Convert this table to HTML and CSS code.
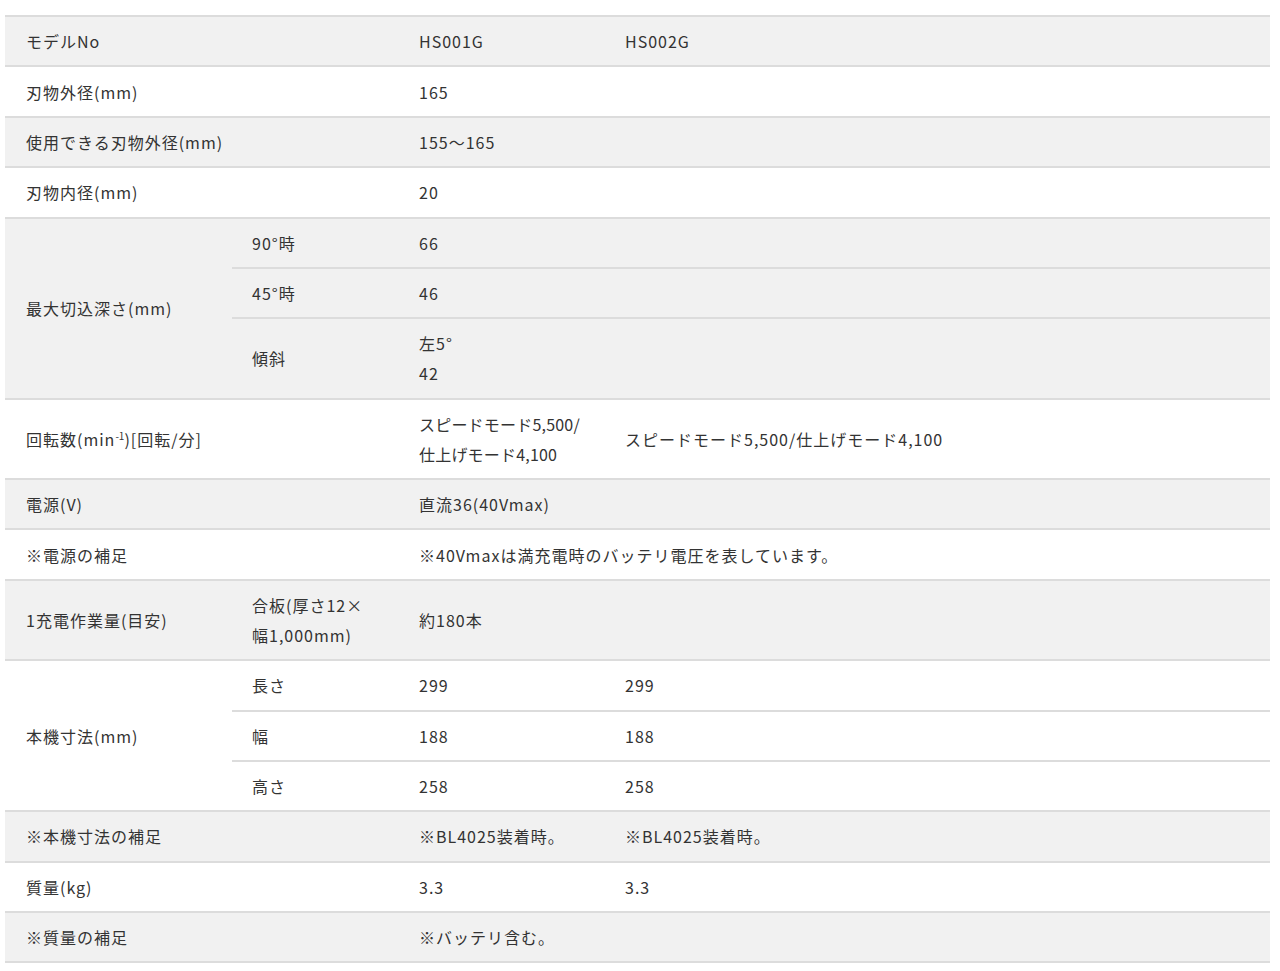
FILE: index.html
```html
<!DOCTYPE html>
<html lang="ja">
<head>
<meta charset="utf-8">
<title>仕様</title>
<link rel="stylesheet" href="styles.css">
</head>
<body>
<table class="spec">
  <colgroup>
    <col class="c1"><col class="c2"><col class="c3"><col class="c4">
  </colgroup>
  <tbody>
    <tr class="g"><th colspan="2">モデルNo</th><td>HS001G</td><td>HS002G</td></tr>
    <tr><th colspan="2">刃物外径(mm)</th><td>165</td><td></td></tr>
    <tr class="g"><th colspan="2">使用できる刃物外径(mm)</th><td>155～165</td><td></td></tr>
    <tr><th colspan="2">刃物内径(mm)</th><td>20</td><td></td></tr>
    <tr class="g"><th rowspan="3">最大切込深さ(mm)</th><td class="sub">90°時</td><td>66</td><td></td></tr>
    <tr class="g"><td class="sub">45°時</td><td>46</td><td></td></tr>
    <tr class="g"><td class="sub">傾斜</td><td>左5°<br>42</td><td></td></tr>
    <tr><th colspan="2">回転数(min<sup>-1</sup>)[回転/分]</th><td class="tight">スピードモード5,500/<br>仕上げモード4,100</td><td>スピードモード5,500/仕上げモード4,100</td></tr>
    <tr class="g"><th colspan="2">電源(V)</th><td>直流36(40Vmax)</td><td></td></tr>
    <tr><th colspan="2">※電源の補足</th><td colspan="2">※40Vmaxは満充電時のバッテリ電圧を表しています。</td></tr>
    <tr class="g"><th>1充電作業量(目安)</th><td class="sub">合板(厚さ12×<br>幅1,000mm)</td><td>約180本</td><td></td></tr>
    <tr><th rowspan="3">本機寸法(mm)</th><td class="sub">長さ</td><td>299</td><td>299</td></tr>
    <tr><td class="sub">幅</td><td>188</td><td>188</td></tr>
    <tr><td class="sub">高さ</td><td>258</td><td>258</td></tr>
    <tr class="g"><th colspan="2">※本機寸法の補足</th><td>※BL4025装着時。</td><td>※BL4025装着時。</td></tr>
    <tr><th colspan="2">質量(kg)</th><td>3.3</td><td>3.3</td></tr>
    <tr class="g"><th colspan="2">※質量の補足</th><td>※バッテリ含む。</td><td></td></tr>
  </tbody>
</table>
</body>
</html>
```

FILE: styles.css
```css
html, body {
  margin: 0;
  padding: 0;
  background: #fff;
}
body {
  padding: 15px 10px 0 5px;
  font-family: "Noto Sans CJK JP", "Noto Sans", sans-serif;
  font-size: 16px;
  letter-spacing: 1px;
  color: #333;
}
.spec {
  width: 1265px;
  border-collapse: collapse;
  table-layout: fixed;
  border-bottom: 2px solid #dcdcdc;
}
.c1 { width: 227px; }
.c2 { width: 167px; }
.c3 { width: 206px; }
.c4 { width: auto; }
.spec th,
.spec td {
  border-top: 2px solid #dcdcdc;
  padding: 9.2px 20px 9.2px 20px;
  line-height: 30px;
  text-align: left;
  vertical-align: middle;
  font-weight: normal;
}
.spec th {
  padding-left: 21px;
}
.spec td.tight {
  letter-spacing: 0.2px;
  white-space: nowrap;
}
.spec tr.g th,
.spec tr.g td {
  background: #f1f1f1;
}
.spec sup {
  font-size: 10px;
  letter-spacing: 0;
  line-height: 0;
  vertical-align: 6px;
}
```
